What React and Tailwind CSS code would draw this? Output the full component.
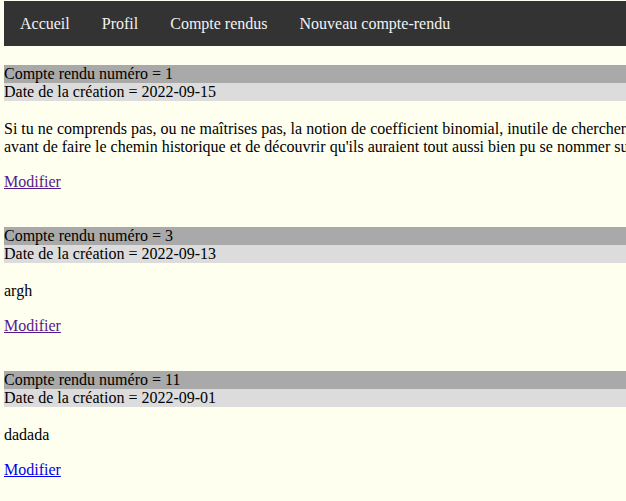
import React from 'react';

const liens = ['Accueil', 'Profil', 'Compte rendus', 'Nouveau compte-rendu'];

const comptesRendus = [
    {
        id: 1,
        date: '2022-09-15',
        lignes: [
            "Si tu ne comprends pas, ou ne maîtrises pas, la notion de coefficient binomial, inutile de chercher à aller plus loin",
            "avant de faire le chemin historique et de découvrir qu'ils auraient tout aussi bien pu se nommer suites de Catalan",
        ],
        visite: true,
    },
    { id: 3, date: '2022-09-13', lignes: ['argh'], visite: true },
    { id: 11, date: '2022-09-01', lignes: ['dadada'], visite: false },
];

const Navbar = () => (
    <nav className="flex bg-[#333333] mt-px">
        {liens.map((lien) => (
            <a key={lien} href="#" className="block px-4 py-[13px] leading-[19px] text-[#f2f2f2] no-underline">
                {lien}
            </a>
        ))}
    </nav>
);

const CompteRendu = ({ cr }) => (
    <div className="pb-[36px] leading-[18px]">
        <div className="bg-[#a9a9a9]">Compte rendu numéro = {cr.id}</div>
        <div className="bg-[#dcdcdc]">Date de la création = {cr.date}</div>
        <p className="mt-[19px] mb-[17px] whitespace-nowrap">
            {cr.lignes.map((ligne, i) => (
                <React.Fragment key={i}>
                    {i > 0 && <br />}
                    {ligne}
                </React.Fragment>
            ))}
        </p>
        <div>
            <a href="#" className={`underline ${cr.visite ? 'text-[#551a8b]' : 'text-[#0000ee]'}`}>
                Modifier
            </a>
        </div>
    </div>
);

export default function App() {
    return (
        <div className="w-screen h-screen overflow-hidden bg-[#fffff0] text-black text-base" style={{ fontFamily: '"Liberation Serif", "Times New Roman", serif' }}>
            <div className="w-[1000px] px-1">
                <Navbar />
                <div className="mt-[19px]">
                    {comptesRendus.map((cr) => (
                        <CompteRendu key={cr.id} cr={cr} />
                    ))}
                </div>
            </div>
        </div>
    );
}
